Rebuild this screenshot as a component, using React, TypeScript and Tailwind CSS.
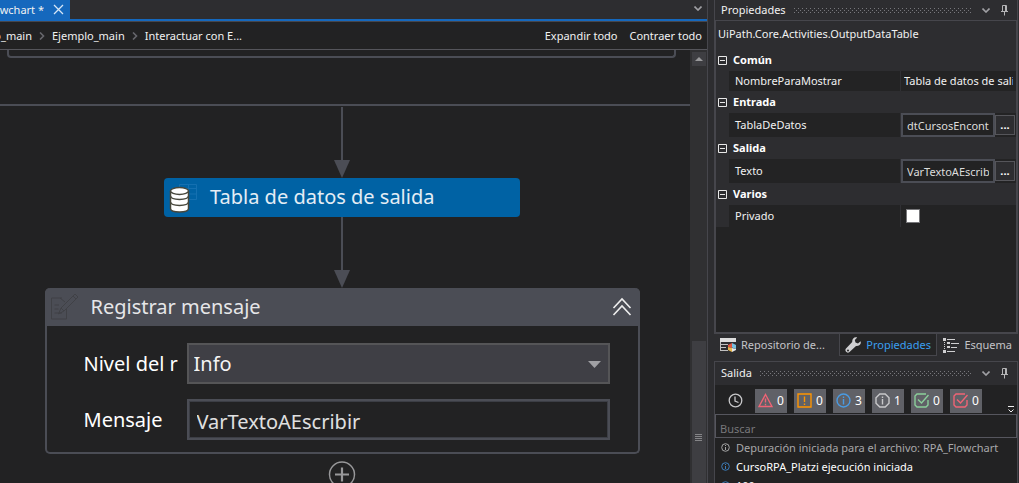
import type { ReactNode } from "react";

function Chevron() {
  return (
    <svg viewBox="0 0 8 5" className="h-[5px] w-2" fill="none" stroke="#a0a0a4" strokeWidth="1.6">
      <path d="M0.5 0.5 4 4 7.5 0.5" />
    </svg>
  );
}

function Pin() {
  return (
    <svg viewBox="0 0 9 11" className="h-[11px] w-[9px]" fill="none" stroke="#b4b4b6" strokeWidth="1">
      <path d="M2.5 6V0.5H6.5V6M1 6.5H8M4.5 7V10.500" />
      <path d="M5.500 1V6" />
    </svg>
  );
}

function Grip() {
  return (
    <svg className="h-[5px] min-w-0 flex-1" aria-hidden="true">
      <defs>
        <pattern id="grip-dots" width="4" height="4" patternUnits="userSpaceOnUse">
          <rect x="0" y="0" width="1" height="1" fill="#77777c" />
          <rect x="2" y="2" width="1" height="1" fill="#77777c" />
        </pattern>
      </defs>
      <rect width="100%" height="5" fill="url(#grip-dots)" />
    </svg>
  );
}

function PanelHeader({ title }: { title: string }) {
  return (
    <header className="flex h-5 shrink-0 items-center pr-2 pl-1.5">
      <h2 className="mr-2 whitespace-nowrap">{title}</h2>
      <Grip />
      <button aria-label="Opciones" className="ml-2 flex w-3 justify-center">
        <Chevron />
      </button>
      <button aria-label="Anclar" className="ml-2">
        <Pin />
      </button>
    </header>
  );
}

function Arrow() {
  return (
    <div className="flex h-[71px] flex-col items-center">
      <div className="w-0.5 flex-1 bg-[#4b4d55]" />
      <svg viewBox="0 0 16 18" className="h-[18px] w-4" fill="#4b4d55">
        <path d="M0 0H16L8 18Z" />
      </svg>
    </div>
  );
}

function Crumb() {
  return (
    <svg viewBox="0 0 6 8" className="mx-[7px] h-2 w-1.5 shrink-0" fill="none" stroke="#66666c" strokeWidth="1.6">
      <path d="M1 0.5 4.5 4 1 7.5" />
    </svg>
  );
}

function DatabaseIcon() {
  return (
    <svg viewBox="0 0 30 30" className="h-[30px] w-[30px] shrink-0">
      <path d="M11.5 1.5H28.5V16.5H11.5ZM11.5 5.5H28.5M20.5 1.5V16.5M20 11H28.5" fill="none" stroke="#1470b1" />
      <path d="M2.5 8V25.500C2.500 30.200 20.500 30.200 20.500 25.500V8" fill="#fff" stroke="#47473c" strokeWidth="1.5" />
      <ellipse cx="11.500" cy="8" rx="9" ry="3.400" fill="#fff" stroke="#47473c" strokeWidth="1.5" />
      <path d="M2.500 13C3 17.500 20 17.500 20.500 13M2.500 19C3 23.500 20 23.500 20.500 19" fill="none" stroke="#47473c" strokeWidth="1.5" />
    </svg>
  );
}

function NoteIcon() {
  return (
    <svg viewBox="0 0 30 30" className="h-[30px] w-[30px] shrink-0" fill="none" stroke="#404146" strokeWidth="1">
      <path d="M12 6H1.500V27H16.500V17M10 6 15 10" />
      <path d="M4.500 13H9M4.500 17H8.500M4.500 21H12" />
      <path d="M8.500 22 11 16 25 2 28 5 14 19Z M11 16 14 19M23 4 26 7" />
    </svg>
  );
}

function Designer() {
  return (
    <main className="flex min-w-0 flex-1 flex-col border-r border-[#46464c]">
      <div className="flex h-[22px] shrink-0 items-start justify-between border-b border-[#46464c]">
        <div className="flex h-[21px] flex-1 items-start justify-between border-b-2 border-[#1568bd]">
          <div className="flex h-[19px] w-[70px] items-center bg-[#1568bd]">
            <div className="flex w-11 shrink-0 justify-end overflow-hidden whitespace-nowrap">owchart *</div>
            <button aria-label="Cerrar pestaña" className="ml-[9px]">
              <svg viewBox="0 0 11 11" className="h-[11px] w-[11px]" fill="none" stroke="#d6e6f6" strokeWidth="1.3">
                <path d="M1 1 10 10M10 1 1 10" />
              </svg>
            </button>
          </div>
          <button aria-label="Documentos abiertos" className="mt-1.5 mr-[5px]">
            <Chevron />
          </button>
        </div>
      </div>
      <nav className="flex h-7 shrink-0 items-center border-b border-[#55555b] bg-[#222223] whitespace-nowrap">
        <a href="#inicio" className="flex w-8 justify-end overflow-hidden">o_main</a>
        <Crumb />
        <a href="#ejemplo">Ejemplo_main</a>
        <Crumb />
        <a href="#interactuar">Interactuar con E...</a>
        <div className="ml-auto flex gap-3 pr-[5px]">
          <button>Expandir todo</button>
          <button>Contraer todo</button>
        </div>
      </nav>
      <div className="flex min-h-0 flex-1 bg-[#222223]">
        <div className="flex min-w-0 flex-1 flex-col overflow-hidden">
          <div className="mr-3.5 ml-[7px] h-2 shrink-0 rounded-b border-2 border-t-0 border-[#4b4d55]" />
          <div className="mt-[46px] h-0.5 shrink-0 bg-[#4b4d55]" />
          <div className="flex flex-col items-center pt-px pr-1.5 [&>*]:shrink-0">
            <Arrow />
            <div className="flex h-[39px] w-[356px] items-center rounded bg-[#0062a4] pl-1">
              <DatabaseIcon />
              <span className="ml-3 pb-0.5 text-[20px] leading-7 text-[#e4edf5]">Tabla de datos de salida</span>
            </div>
            <Arrow />
            <section className="w-[595px] rounded-[5px] border-2 border-t-0 border-[#4b4d55]">
              <header className="-mx-0.5 flex h-[38px] items-center rounded-t-[5px] bg-[#4b4d55] pr-2 pl-[5px]">
                <NoteIcon />
                <h2 className="ml-[11px] text-[20px] leading-7 text-[#e6e6e8]">Registrar mensaje</h2>
                <button aria-label="Contraer actividad" className="ml-auto">
                  <svg viewBox="0 0 20 20" className="h-5 w-5" fill="none" stroke="#eee" strokeWidth="1.6">
                    <path d="M1.500 11 10 2 18.500 11M1.500 18 10 9 18.500 18" />
                  </svg>
                </button>
              </header>
              <div className="flex flex-col gap-[15px] pt-[17px] pr-7 pb-3 pl-[37px] text-[20px] text-white">
                <div className="flex items-center">
                  <label htmlFor="nivel" className="mr-2 w-[95px] shrink-0 whitespace-nowrap">Nivel del r</label>
                  <div className="relative flex-1">
                    <select id="nivel" className="block h-[41px] w-full appearance-none border-2 border-[#555557] bg-[#3f3f45] pl-[5px] text-[#f4f4f4]">
                      <option>Info</option>
                    </select>
                    <svg viewBox="0 0 13 7" className="pointer-events-none absolute top-[18px] right-[9px] h-[7px] w-[13px]" fill="#a0a0a4">
                      <path d="M0 0H13L6.500 7Z" />
                    </svg>
                  </div>
                </div>
                <div className="flex items-center">
                  <label htmlFor="mensaje" className="mr-2 w-[95px] shrink-0">Mensaje</label>
                  <input
                    id="mensaje"
                    defaultValue="VarTextoAEscribir"
                    className="h-[41px] min-w-0 flex-1 border-2 border-[#4b4d55] bg-[#222223] pt-1 pl-2 text-[#e0e0e0] inset-ring inset-ring-[#3c3e45]"
                  />
                </div>
              </div>
            </section>
            <button aria-label="Agregar actividad" className="mt-[7px]">
              <svg viewBox="0 0 28 28" className="h-7 w-7" fill="none" stroke="#98989a">
                <circle cx="14" cy="13.500" r="12.500" strokeWidth="1.5" />
                <path d="M7 13.500H21M14 6.500V20.500" strokeWidth="2.2" />
              </svg>
            </button>
          </div>
        </div>
        <div className="flex w-[17px] flex-col items-center bg-[#303032] pt-0.5">
          <button aria-label="Subir" className="flex h-3.5 w-3.5 items-center justify-center bg-[#3e3e42]">
            <svg viewBox="0 0 8 4" className="h-1 w-2" fill="#99999b">
              <path d="M0 4H8L4 0Z" />
            </svg>
          </button>
          <div className="mt-[275px] flex w-3.5 flex-1 justify-center bg-[#3e3e42] pt-[93px]">
            <svg viewBox="0 0 7 7" className="h-[7px] w-[7px]" fill="#858588">
              <path d="M0 0H7V1H0ZM0 2H7V3H0ZM0 4H7V5H0ZM0 6H7V7H0Z" />
            </svg>
          </div>
        </div>
      </div>
    </main>
  );
}

function Group({ title, children }: { title: string; children: ReactNode }) {
  return (
    <section className="bg-[#2d2d30]">
      <h3 className="flex h-[22px] items-center gap-1.5 pl-0.5 font-bold text-white">
        <svg viewBox="0 0 9 9" className="h-[9px] w-[9px]" fill="none" stroke="#e8e8e8">
          <path d="M0.500 0.500H8.500V8.500H0.500ZM2 4.500H7" />
        </svg>
        {title}
      </h3>
      {children}
    </section>
  );
}

function Property({ id, name, height, children }: { id: string; name: string; height: string; children: ReactNode }) {
  return (
    <div className={`ml-[13px] flex items-center bg-[#232324] text-[#f1f1f1] ${height}`}>
      <label htmlFor={id} className="w-[171px] shrink-0 pl-1.5">{name}</label>
      <div className="flex h-full min-w-0 flex-1 items-center border-l border-[#303034]">{children}</div>
    </div>
  );
}

function Expression({ id, value }: { id: string; value: string }) {
  return (
    <>
      <input
        id={id}
        defaultValue={value}
        className="h-6 min-w-0 flex-1 border-2 border-[#4b4d55] bg-[#222223] px-1 text-[#dcdcdc]"
      />
      <button aria-label={`Editar ${id}`} className="mr-px flex h-5 w-5 shrink-0 items-center justify-center border border-[#55555a] bg-[#2d2d30] font-bold text-white">
        ...
      </button>
    </>
  );
}

function Counter({ label, count, color, children }: { label: string; count: number; color: string; children: ReactNode }) {
  return (
    <button aria-label={label} className="flex h-6 w-8 items-center justify-center gap-1 bg-[#606167] text-[12px] text-white">
      <svg viewBox="0 0 15 15" className="h-[15px] w-[15px] shrink-0" fill="none" stroke={color} strokeWidth="1.4">
        {children}
      </svg>
      {count}
    </button>
  );
}

function InfoIcon({ color }: { color: string }) {
  return (
    <svg viewBox="0 0 9 9" className="h-[9px] w-[9px] shrink-0" fill="none" stroke={color}>
      <circle cx="4.500" cy="4.500" r="3.800" />
      <path d="M4.500 4V7M4.500 2V3" />
    </svg>
  );
}

const log = [
  { text: "Depuración iniciada para el archivo: RPA_Flowchart", color: "#a5a5a5", tone: "text-[#a8a8aa]" },
  { text: "CursoRPA_Platzi ejecución iniciada", color: "#3c7cb8", tone: "text-white" },
  { text: "100", color: "#3c7cb8", tone: "text-white" },
];

function Sidebar() {
  return (
    <aside className="ml-1.5 flex w-[304px] shrink-0 flex-col">
      <div className="flex h-[334px] shrink-0 flex-col">
        <div className="border-x border-[#46464c]">
          <PanelHeader title="Propiedades" />
        </div>
        <div className="flex min-h-0 flex-1 flex-col border-2 border-t border-[#46464c] bg-[#232324]">
          <div className="h-7 shrink-0 bg-[#2d2d30] pt-[5px] pl-0.5 whitespace-nowrap">UiPath.Core.Activities.OutputDataTable</div>
          <Group title="Común">
            <Property id="nombre" name="NombreParaMostrar" height="h-5">
              <input id="nombre" defaultValue="Tabla de datos de salida" className="mr-[3px] w-full min-w-0 bg-transparent pl-[3px]" />
            </Property>
          </Group>
          <Group title="Entrada">
            <Property id="tabla" name="TablaDeDatos" height="h-6">
              <Expression id="tabla" value="dtCursosEncontrados" />
            </Property>
          </Group>
          <Group title="Salida">
            <Property id="texto" name="Texto" height="h-6">
              <Expression id="texto" value="VarTextoAEscribir" />
            </Property>
          </Group>
          <Group title="Varios">
            <Property id="privado" name="Privado" height="h-[22px]">
              <input id="privado" type="checkbox" className="ml-[5px] h-3.5 w-3.5 appearance-none border border-[#77777a] bg-white" />
            </Property>
          </Group>
        </div>
      </div>
      <div className="flex h-[22px] shrink-0 items-center justify-between text-[#c4c4c8]">
        <button className="flex items-center gap-[5px] pl-1.5">
          <svg viewBox="0 0 16 14" className="h-3.5 w-4">
            <path d="M0 0H16V4H0Z" fill="#ddd" />
            <path d="M0 6H8V7H0ZM0 9H6V10H0ZM0 12H8V13H0ZM0 4H1V13H0Z" fill="#c0c0c0" />
            <path d="M8 7 12 5V10L8 9Z" fill="#df5440" />
            <path d="M12 5 16 7V11L12 9.500Z" fill="#76bddd" />
            <path d="M8 9 12 10V14L8 12Z" fill="#e7b74d" />
            <path d="M12 10 16 11V12L12 14Z" fill="#e8e8e8" />
          </svg>
          Repositorio de...
        </button>
        <button className="ml-2 flex h-[22px] items-center gap-[5px] border border-t-0 border-[#46464c] bg-[#252526] px-[5px] text-[#3a9ff0]">
          <svg viewBox="0 0 16 16" className="h-4 w-4" fill="#d0d0d2">
            <path d="M15.600 4.200 13 6.500 10.500 5.500 9.800 3 12.200.500C9.500-.500 7 1.500 7.200 5L1 11.500C-.900 13.800 2 17 4.500 15L11 9C14.500 9.200 16.500 7 15.600 4.200ZM3 12.500A1 1 0 1 1 3 14.500A1 1 0 1 1 3 12.500Z" fillRule="evenodd" />
          </svg>
          Propiedades
        </button>
        <button className="flex items-center gap-[5px] pr-1.5">
          <svg viewBox="0 0 16 15" className="h-[15px] w-4" fill="#d0d0d2">
            <path d="M0 0H3V3H0ZM4 1H12V2H4ZM4 4H7V6H4ZM8 5H16V6H8ZM4 8H7V10H4ZM8 9H14V10H8ZM0 12H3V15H0ZM4 13H12V14H4ZM1 4H2V5H1ZM1 6H2V7H1ZM1 8H2V9H1ZM1 10H2V11H1Z" />
          </svg>
          Esquema
        </button>
      </div>
      <section className="mt-[5px] flex min-h-0 flex-1 flex-col border border-b-0 border-[#46464c] bg-[#222223]">
        <div className="shrink-0 bg-[#2d2d30] pt-px pb-0.5">
          <PanelHeader title="Salida" />
        </div>
        <div className="flex h-[29px] shrink-0 items-center gap-[7px] pt-0.5 pl-[13px]">
          <button aria-label="Marcas de tiempo" className="mr-[5px]">
            <svg viewBox="0 0 15 15" className="h-[15px] w-[15px]" fill="none" stroke="#c8c8ca" strokeWidth="1.3">
              <circle cx="7.500" cy="7.500" r="6.300" />
              <path d="M7 3.500V8L10.500 9.500" />
            </svg>
          </button>
          <Counter label="Errores" count={0} color="#ef6475">
            <path d="M7.500 1.500 14 13.500H1ZM7.500 5.500V9.500M7.500 10.800V12.200" />
          </Counter>
          <Counter label="Advertencias" count={0} color="#ff9500">
            <path d="M1 1H14V14H1ZM7.500 3.500V9M7.500 10.500V12" />
          </Counter>
          <Counter label="Información" count={3} color="#4a9be2">
            <circle cx="7.500" cy="7.500" r="6.500" />
            <path d="M7.500 6V11.500M7.500 3.500V5" />
          </Counter>
          <Counter label="Seguimiento" count={1} color="#c8c8ca">
            <path d="M4.800 1H10.200L14 4.800V10.200L10.200 14H4.800L1 10.200V4.800ZM7.500 6V11.500M7.500 3.500V5" />
          </Counter>
          <Counter label="Correctos" count={0} color="#8bcf9b">
            <path d="M14 7V12L12 14H3L1 12V3L3 1H12M4 6.500 7.500 10 14.500 2" />
          </Counter>
          <Counter label="Fallidos" count={0} color="#ef6475">
            <path d="M14 7V12L12 14H3L1 12V3L3 1H12M4 6.500 7.500 10 14.500 2" />
          </Counter>
          <button aria-label="Más opciones" className="mr-[3px] ml-auto self-end pb-px">
            <svg viewBox="0 0 6 7" className="h-[7px] w-1.5" fill="none" stroke="#eee">
              <path d="M0 0.500H6M0.500 3.500 3 6 5.500 3.500" />
            </svg>
          </button>
        </div>
        <input
          aria-label="Buscar"
          placeholder="Buscar"
          className="h-6 w-full shrink-0 border border-[#56565e] bg-[#222223] pt-1 pl-1 placeholder:text-[#77777a]"
        />
        <ul>
          {log.map((entry) => (
            <li key={entry.text} className={`flex h-[19px] items-center gap-1.5 pl-1.5 whitespace-nowrap ${entry.tone}`}>
              <InfoIcon color={entry.color} />
              {entry.text}
            </li>
          ))}
        </ul>
      </section>
    </aside>
  );
}

export default function App() {
  return (
    <div className="flex h-screen overflow-hidden bg-[#2d2d30] pr-px font-['Noto_Sans',sans-serif] text-[11px] leading-4 text-[#f1f1f1]">
      <Designer />
      <Sidebar />
    </div>
  );
}
